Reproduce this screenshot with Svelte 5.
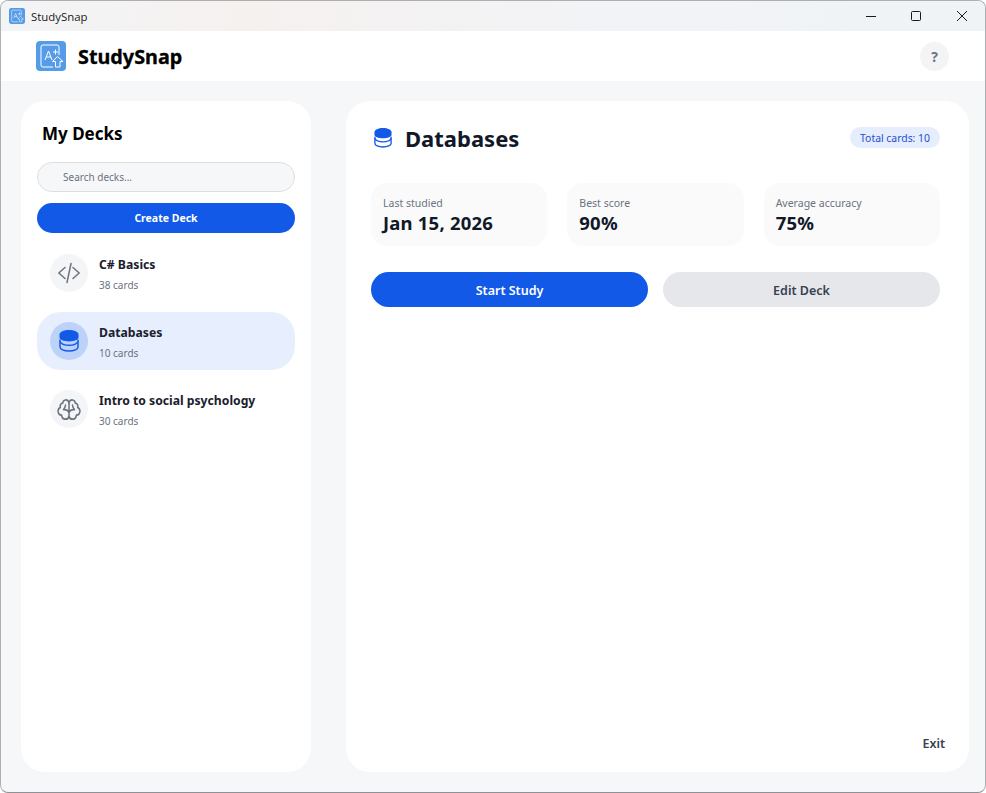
<script>
  const decks = [
    { name: 'C# Basics', count: 38, icon: 'code' },
    { name: 'Databases', count: 10, icon: 'db', active: true },
    { name: 'Intro to social psychology', count: 30, icon: 'brain' }
  ];

  const stats = [
    { label: 'Last studied', value: 'Jan 15, 2026' },
    { label: 'Best score', value: '90%' },
    { label: 'Average accuracy', value: '75%' }
  ];
</script>

{#snippet logo(size)}
  <svg class="logo" width={size} height={size} viewBox="0 0 30 30" fill="none">
    <rect width="30" height="30" rx="4" fill="#559be8" />
    <path d="M17 26H7a2 2 0 0 1-2-2V6a2 2 0 0 1 2-2h14a2 2 0 0 1 2 2v8" stroke="#fff" stroke-width="1" />
    <path d="M9 19l3.500-9 3.500 9M10.200 16h4.600M17 11h5M19.500 8.500v5" stroke="#fff" stroke-width="1" />
    <path d="M21.500 15.500l-5 5h3v5.500h4.500v-5.500h3z" fill="#559be8" stroke="#fff" stroke-width="1" stroke-linejoin="round" />
  </svg>
{/snippet}

{#snippet dbIcon(w, h)}
  <svg class="db" width={w} height={h} viewBox="0 0 20 22" fill="none">
    <path d="M.5 4.500C.5 2 4.800 0 10 0s9.500 2 9.500 4.500v3c0 2.200-4.300 3.900-9.500 3.900S.5 9.700.5 7.500z" fill="#1259e8" />
    <path d="M1 9.500v7.500C1 19.300 5 21 10 21s9-1.700 9-4V9.500" stroke="#1259e8" stroke-width="1.500" />
    <path d="M1 11.500c1.200 2.500 4.800 3.800 9 3.800s7.800-1.300 9-3.800" stroke="#1259e8" stroke-width="1.500" />
  </svg>
{/snippet}

<div class="window">
  <div class="titlebar">
    <div class="title-left">
      {@render logo(16)}
      <span>StudySnap</span>
    </div>
    <div class="controls">
      <svg width="46" height="30" viewBox="0 0 46 30"><path d="M19 15.500h10" stroke="#1a1a1a" fill="none" /></svg>
      <svg width="46" height="30" viewBox="0 0 46 30"><rect x="18.500" y="10.500" width="9" height="9" rx="1" stroke="#1a1a1a" fill="none" /></svg>
      <svg width="46" height="30" viewBox="0 0 46 30"><path d="M18 10l10 10M28 10L18 20" stroke="#1a1a1a" fill="none" /></svg>
    </div>
  </div>

  <header class="appbar">
    <div class="brand">
      {@render logo(30)}
      <span class="brand-name">StudySnap</span>
    </div>
    <button class="help" type="button">?</button>
  </header>

  <div class="content">
    <aside class="sidebar">
      <h2>My Decks</h2>
      <input class="search" type="text" placeholder="Search decks..." />
      <button class="create" type="button">Create Deck</button>
      <ul class="deck-list">
        {#each decks as deck}
          <li class="deck" class:active={deck.active}>
            <div class="deck-icon">
              {#if deck.icon === 'code'}
                <svg width="24" height="24" viewBox="0 0 24 24" fill="none" stroke="#6b7280" stroke-width="1.500" stroke-linecap="round" stroke-linejoin="round">
                  <path d="M8 6.500L1.800 12 8 17.500M16 6.500l6.200 5.500-6.200 5.500M14 2.500l-4 19" />
                </svg>
              {:else if deck.icon === 'db'}
                {@render dbIcon(20, 22)}
              {:else}
                <svg width="24" height="24" viewBox="0 0 24 24" fill="none" stroke="#6b7280" stroke-width="1.500" stroke-linecap="round" stroke-linejoin="round">
                  <g transform="scale(1 1.150)">
                    <path d="M12 5c-.6-1.700-2-2.600-3.600-2.400C6.800 2.800 5.800 4 5.800 5.300 3.900 5.500 2.800 7.200 3.300 9 1.600 9.800.7 11.700 1.300 13.500c.5 1.500 1.900 2.400 3.300 2.300.2 2 1.600 3.400 3.400 3.500 1.700.1 3.300-.6 4-2.300" />
                    <path d="M12 5c.6-1.700 2-2.600 3.600-2.400 1.600.2 2.600 1.400 2.600 2.700 1.900.2 3 1.900 2.500 3.700 1.700.8 2.600 2.700 2 4.500-.5 1.500-1.900 2.400-3.300 2.300-.2 2-1.600 3.400-3.400 3.500-1.700.1-3.300-.6-4-2.300" />
                    <path d="M12 5v12M12 13.500c-1-1.800-2.500-2.500-4.500-2.500M8.500 7c-.2 1.500-.6 2.800-2 4M12 13.500c1-1.800 2.500-2.500 4.500-2.500M15.500 7c.2 1.500.6 2.800 2 4" />
                  </g>
                </svg>
              {/if}
            </div>
            <div class="deck-text">
              <div class="deck-name">{deck.name}</div>
              <div class="deck-count">{deck.count} cards</div>
            </div>
          </li>
        {/each}
      </ul>
    </aside>

    <main class="detail">
      <div class="detail-head">
        <div class="detail-title">
          {@render dbIcon(18, 20)}
          <h1>Databases</h1>
        </div>
        <span class="total">Total cards: 10</span>
      </div>

      <div class="stats">
        {#each stats as stat}
          <div class="stat">
            <div class="stat-label">{stat.label}</div>
            <div class="stat-value">{stat.value}</div>
          </div>
        {/each}
      </div>

      <div class="actions">
        <button class="start" type="button">Start Study</button>
        <button class="edit" type="button">Edit Deck</button>
      </div>

      <button class="exit" type="button">Exit</button>
    </main>
  </div>
</div>

<style>
  :global(body) {
    margin: 0;
    background: #fff;
    font-family: "Noto Sans", "Open Sans", sans-serif;
  }

  .window {
    width: 986px;
    height: 793px;
    box-sizing: border-box;
    display: flex;
    flex-direction: column;
    border: 1px solid #adb0b3;
    border-bottom-color: #8f9194;
    border-radius: 8px;
    overflow: hidden;
    background: #f6f7f9;
  }

  .titlebar {
    height: 30px;
    flex: none;
    display: flex;
    justify-content: space-between;
    align-items: center;
    background: linear-gradient(90deg, #f3f4f6 0%, #f5f1ef 25%, #f2f3f6 60%, #eff3f6 100%);
  }

  .title-left {
    display: flex;
    align-items: center;
    gap: 6px;
    padding-left: 8px;
    font-size: 11.400px;
    color: #1a1a1a;
    font-family: "Open Sans", "Noto Sans", sans-serif;
  }

  .controls {
    display: flex;
  }

  .controls svg,
  .logo,
  .db {
    display: block;
  }

  .appbar {
    height: 50px;
    flex: none;
    box-sizing: border-box;
    display: flex;
    justify-content: space-between;
    align-items: center;
    padding: 0 36px 0 35px;
    background: #fff;
  }

  .brand {
    display: flex;
    align-items: center;
    gap: 12px;
  }

  .brand-name {
    font-size: 19.800px;
    font-weight: 700;
    color: #000;
    -webkit-text-stroke: 0.3px #000;
  }

  .help {
    width: 29px;
    height: 29px;
    border: none;
    border-radius: 50%;
    padding: 0;
    background: #f3f4f6;
    color: #6b7280;
    font: 700 14px "Noto Sans", sans-serif;
  }

  .content {
    flex: 1;
    min-height: 0;
    display: flex;
    gap: 35px;
    padding: 20px 16px 20px 20px;
  }

  .sidebar {
    width: 290px;
    flex: none;
    box-sizing: border-box;
    padding: 0 16px;
    background: #fff;
    border-radius: 24px;
    display: flex;
    flex-direction: column;
  }

  h2 {
    margin: 20px 0 15px 5px;
    font-size: 17px;
    line-height: 26px;
    font-weight: 700;
    color: #000;
  }

  .search {
    height: 30px;
    box-sizing: border-box;
    width: 100%;
    padding: 0 12px 0 25px;
    border: 1px solid #dcdee2;
    border-radius: 15px;
    background: #f6f7f9;
    font: 10px "Noto Sans", sans-serif;
    outline: none;
  }

  .search::placeholder {
    color: #6b7280;
    opacity: 1;
  }

  .create {
    height: 30px;
    margin-top: 11px;
    border: none;
    border-radius: 15px;
    background: #1259e8;
    color: #fff;
    font: 700 10.500px "Noto Sans", sans-serif;
  }

  .deck-list {
    list-style: none;
    margin: 11px 0 0;
    padding: 0;
    display: flex;
    flex-direction: column;
    gap: 10px;
  }

  .deck {
    height: 58px;
    box-sizing: border-box;
    display: flex;
    align-items: center;
    gap: 11px;
    padding: 0 13px;
    border-radius: 24px;
  }

  .deck.active {
    background: #e7eefd;
  }

  .deck-icon {
    width: 38px;
    height: 38px;
    flex: none;
    display: flex;
    align-items: center;
    justify-content: center;
    border-radius: 50%;
    background: #f4f5f6;
  }

  .active .deck-icon {
    background: #bdd2f8;
  }

  .deck-text {
    padding-top: 2px;
  }

  .deck-name {
    font-size: 12.200px;
    line-height: 16px;
    font-weight: 700;
    color: #1a202c;
  }

  .deck-count {
    margin-top: 5px;
    font-size: 10px;
    line-height: 14px;
    color: #6b7280;
  }

  .detail {
    flex: 1;
    min-width: 0;
    position: relative;
    box-sizing: border-box;
    padding: 22px 29px 0 25px;
    background: #fff;
    border-radius: 24px;
  }

  .detail-head {
    display: flex;
    justify-content: space-between;
    align-items: flex-start;
    height: 60px;
  }

  .detail-title {
    display: flex;
    align-items: center;
    gap: 13px;
    padding-left: 3px;
    margin-top: -1px;
  }

  h1 {
    margin: 0;
    font-size: 22px;
    line-height: 32px;
    font-weight: 700;
    color: #111827;
  }

  .total {
    margin-top: 4px;
    padding: 1px 10px 0;
    line-height: 20px;
    font-size: 10.400px;
    color: #1d4ed8;
    background: #e6edfc;
    border-radius: 11px;
  }

  .stats {
    display: flex;
    gap: 20px;
  }

  .stat {
    flex: 1;
    height: 63px;
    box-sizing: border-box;
    padding: 13px 12px 0;
    background: #fafafb;
    border-radius: 16px;
  }

  .stat-label {
    font-size: 10.500px;
    line-height: 14px;
    color: #6b7280;
  }

  .stat-value {
    margin-top: 1px;
    font-size: 18.500px;
    line-height: 24px;
    font-weight: 700;
    letter-spacing: 0.2px;
    color: #111827;
  }

  .actions {
    display: flex;
    gap: 15px;
    margin-top: 26px;
  }

  .actions button {
    flex: 1;
    height: 35px;
    padding: 1px 0 0;
    border: none;
    border-radius: 18px;
    font: 600 12.500px "Noto Sans", sans-serif;
  }

  .start {
    background: #1259e8;
    color: #fff;
  }

  .edit {
    background: #e5e7eb;
    color: #374151;
  }

  .exit {
    position: absolute;
    right: 24px;
    bottom: 20px;
    padding: 0;
    border: none;
    background: none;
    color: #374151;
    font: 600 12.500px "Noto Sans", sans-serif;
  }
</style>
